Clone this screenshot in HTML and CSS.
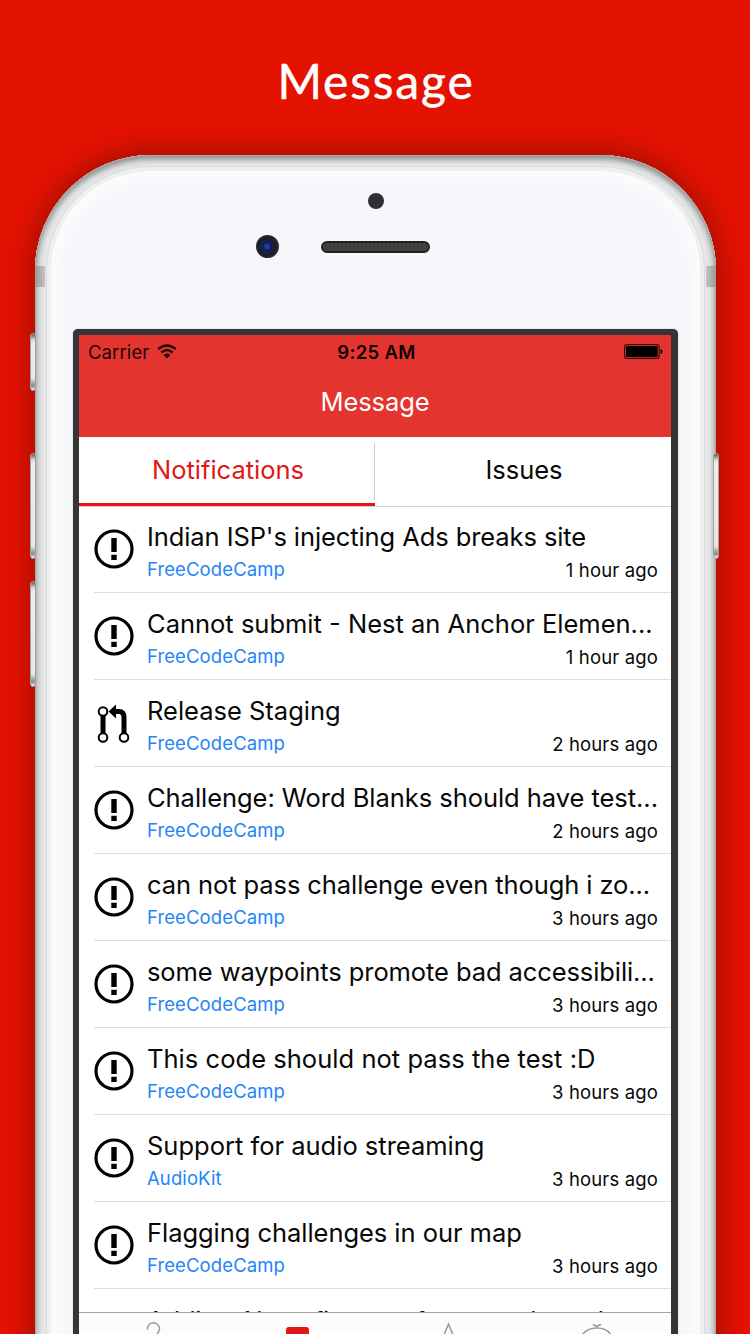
FILE: index.html
```html
<!DOCTYPE html>
<html lang="en">
<head>
<meta charset="utf-8">
<title>Message</title>
<link rel="stylesheet" href="styles.css">
</head>
<body>
<svg class="defs" width="0" height="0">
  <symbol id="issue" viewBox="0 0 40 40"><circle cx="20" cy="20" r="18" fill="none" stroke="#000" stroke-width="3.200"/><path d="M17.300 9h5.400v14h-5.400zM17.300 25.800h5.400v5.200h-5.400z"/></symbol>
  <symbol id="pull" viewBox="0 0 40 40"><path d="M9 12v20M22 8.500h3q5 0 5 6V32" fill="none" stroke="#000" stroke-width="5"/><path d="M14.500 8.500 22 1.500v14z"/><g fill="#fff" stroke="#000" stroke-width="2"><circle cx="9" cy="8.500" r="4.300"/><circle cx="9" cy="34.500" r="4.300"/><circle cx="30" cy="34.500" r="4.300"/></g></symbol>
</svg>
<main class="poster">
  <h1 class="poster-title">Message</h1>
  <div class="phone">
    <i class="band band-left"></i><i class="band band-right"></i>
    <i class="key key-mute"></i><i class="key key-up"></i><i class="key key-down"></i><i class="key key-power"></i>
    <div class="sensors">
      <i class="sensor"></i>
      <div class="ear"><i class="camera"></i><i class="speaker"></i></div>
    </div>
    <div class="screen">
      <header class="top">
        <div class="status">
          <span class="carrier"><span class="carrier-name">Carrier</span>
            <svg width="20" height="15" viewBox="0 0 20 15"><g fill="none" stroke="#200504" stroke-width="2.300"><path d="M1.200 5.200Q10-2.200 18.800 5.200"/><path d="M4.300 8.500Q10 3.700 15.700 8.500"/></g><path d="M6.500 10.900Q10 8 13.500 10.900L10 14.500z" fill="#200504"/></svg>
          </span>
          <span class="clock">9:25 AM</span>
          <svg class="battery" width="39" height="15" viewBox="0 0 39 15"><rect x=".6" y=".6" width="34.500" height="13.800" rx="2" fill="none" stroke="#400806" stroke-width="1.200"/><rect x="2" y="2" width="31.700" height="11" rx="1"/><path d="M36.500 5q2 .5 2 2.500t-2 2.500z"/></svg>
        </div>
        <h2 class="nav-title">Message</h2>
      </header>
      <nav class="tabs"><a class="tab active">Notifications</a><a class="tab">Issues</a></nav>
      <ul class="list">
        <li class="row"><svg class="icon"><use href="#issue"/></svg><div class="body"><p class="title snug">Indian ISP's injecting Ads breaks site</p><p class="meta"><span class="repo">FreeCodeCamp</span><span class="time">1 hour ago</span></p></div></li>
        <li class="row"><svg class="icon"><use href="#issue"/></svg><div class="body"><p class="title">Cannot submit - Nest an Anchor Elemen...</p><p class="meta"><span class="repo">FreeCodeCamp</span><span class="time">1 hour ago</span></p></div></li>
        <li class="row"><svg class="icon"><use href="#pull"/></svg><div class="body"><p class="title">Release Staging</p><p class="meta"><span class="repo">FreeCodeCamp</span><span class="time">2 hours ago</span></p></div></li>
        <li class="row"><svg class="icon"><use href="#issue"/></svg><div class="body"><p class="title close">Challenge: Word Blanks should have test...</p><p class="meta"><span class="repo">FreeCodeCamp</span><span class="time">2 hours ago</span></p></div></li>
        <li class="row"><svg class="icon"><use href="#issue"/></svg><div class="body"><p class="title snug">can not pass challenge even though i zo...</p><p class="meta"><span class="repo">FreeCodeCamp</span><span class="time">3 hours ago</span></p></div></li>
        <li class="row"><svg class="icon"><use href="#issue"/></svg><div class="body"><p class="title snug">some waypoints promote bad accessibili...</p><p class="meta"><span class="repo">FreeCodeCamp</span><span class="time">3 hours ago</span></p></div></li>
        <li class="row"><svg class="icon"><use href="#issue"/></svg><div class="body"><p class="title airy">This code should not pass the test :D</p><p class="meta"><span class="repo">FreeCodeCamp</span><span class="time">3 hours ago</span></p></div></li>
        <li class="row"><svg class="icon"><use href="#issue"/></svg><div class="body"><p class="title">Support for audio streaming</p><p class="meta"><span class="repo">AudioKit</span><span class="time">3 hours ago</span></p></div></li>
        <li class="row"><svg class="icon"><use href="#issue"/></svg><div class="body"><p class="title close">Flagging challenges in our map</p><p class="meta"><span class="repo">FreeCodeCamp</span><span class="time">3 hours ago</span></p></div></li>
        <li class="row"><div class="icon"></div><div class="body"><p class="title peek">Adding Alamofire as a framework mod...</p></div></li>
      </ul>
      <footer class="tabbar">
        <svg width="592" height="22" viewBox="0 0 592 22" fill="none" stroke="#999" stroke-width="1.500"><path d="M68.500 16.500a6 6 0 1 1 11 2.500L76 24"/><rect x="207" y="14" width="23" height="16" rx="3" fill="#e01818" stroke="none"/><path d="m365 22 4.500-11 4.500 11"/><path d="M503 22q5-7 15-7t14 7M514 11.500l3.500 2 4.500-2M518 13.500v1.500"/></svg>
      </footer>
    </div>
  </div>
</main>
</body>
</html>
```
FILE: styles.css
```css
* { box-sizing: border-box; margin: 0; padding: 0; }
body { width: 750px; height: 1334px; overflow: hidden; font-family: Inter, "Liberation Sans", sans-serif; background: #e41200; color: #080808; }
.defs { display: block; position: absolute; }
.poster { height: 1334px; overflow: hidden; display: flex; flex-direction: column; }
.poster-title { flex: none; height: 155px; padding: 51px 0 0 2px; text-align: center; color: #fff; font: 400 48px/60px Lato, sans-serif; letter-spacing: 1.800px; -webkit-text-stroke: .4px #fff; }
.phone {
  position: relative; flex: none; width: 681px; height: 1240px; margin-left: 35px; padding: 0 38px;
  border-radius: 116px 116px 0 0; background: #f5f7fa;
  box-shadow: inset 0 0 0 1px #a9a7a5, inset 0 6px 7px -3px #858585, inset 0 0 7px 2px #a3a3a3, inset 0 0 0 11px #e6e7e8, inset 0 0 0 12px #d9dbdc, inset 0 0 0 16px #eeefef, inset 0 0 18px 20px #fcfefe, 0 0 24px 6px rgba(120, 15, 0, .55);
}
.sensors { height: 174px; padding-top: 38px; }
.sensor { display: block; width: 16px; height: 16px; margin-left: 295px; border-radius: 50%; background: #303032; }
.ear { display: flex; align-items: center; gap: 42px; margin: 26px 0 0 183px; }
.camera { width: 23px; height: 23px; border-radius: 50%; background: radial-gradient(circle at 48% 50%, #2540a0 0 10%, #0a1760 25%, #172550 34%, #1b1b20 48%, #25252a 62%, #555 100%); }
.speaker { width: 109px; height: 12px; border-radius: 6px; border: 2px solid #222; background: repeating-linear-gradient(90deg, #444 0 2px, #3b3b3b 2px 4px); }
.band { position: absolute; top: 111px; width: 10px; height: 21px; background: linear-gradient(90deg, #999, #c4c4c4); }
.band-left { left: 0; }
.band-right { right: 0; transform: scaleX(-1); }
.key { position: absolute; width: 6px; left: -5px; border: 1px solid #a3a09e; border-radius: 3px; background: linear-gradient(#555 0, #ddd 6px, #eee 10px, #e7e7e7 calc(100% - 12px), #888 calc(100% - 4px), #fff); }
.key-mute { top: 178px; height: 58px; }
.key-up { top: 298px; height: 106px; }
.key-down { top: 426px; height: 106px; }
.key-power { top: 298px; left: 678px; height: 106px; }
.screen { width: 605px; height: 1010px; border: 6px solid #353535; border-right-width: 7px; border-radius: 5px 5px 0 0; background: #fff; display: flex; flex-direction: column; box-shadow: 0 0 1px #777; }
.top { flex: none; height: 102px; background: #e3342f; }
.status { display: grid; grid-template-columns: 1fr auto 1fr; align-items: center; height: 33px; padding: 0 8px 0 9px; color: #200504; font-size: 18.500px; }
.carrier { display: flex; align-items: center; gap: 8px; }
.carrier-name { letter-spacing: .1px; }
.clock { font-weight: 600; color: #0d0101; letter-spacing: .35px; padding-left: 2px; }
.battery { justify-self: end; }
.nav-title { height: 69px; line-height: 67px; text-align: center; color: #fff; font-size: 25.500px; font-weight: 400; letter-spacing: -.1px; }
.tabs { flex: none; display: flex; height: 70px; border-bottom: 1px solid #d0d0d0; }
.tab { flex: 1; height: 69px; padding-left: 2px; text-align: center; font-size: 25.500px; line-height: 66px; }
.active { color: #e01818; border-bottom: 3px solid #e01818; background: linear-gradient(#ccc, #ccc) right 6px / 1px 57px no-repeat; }
.list { flex: none; height: 805px; overflow: hidden; list-style: none; }
.row { display: flex; height: 87px; padding-left: 15px; background: linear-gradient(#dedede, #dedede) 15px 85px / 100% 1px no-repeat; }
.icon { flex: none; width: 40px; height: 40px; margin-top: 22px; }
.body { flex: 1; margin-left: 13px; }
.title { padding-top: 13px; font-size: 25.500px; line-height: 34px; white-space: nowrap; }
.snug { letter-spacing: -.09px; }
.close { letter-spacing: -.045px; }
.airy { letter-spacing: .04px; }
.peek { padding-top: 14px; letter-spacing: -.15px; }
.meta { display: flex; justify-content: space-between; padding: 3px 13px 0 0; font-size: 18.500px; line-height: 24px; }
.repo { color: #2484f8; letter-spacing: .1px; }
.time { padding-top: 1px; letter-spacing: .15px; }
.tabbar { flex: none; height: 90px; border-top: 1px solid #a5a5a5; background: #fcfcfc; }
.tabbar svg { display: block; }
```
